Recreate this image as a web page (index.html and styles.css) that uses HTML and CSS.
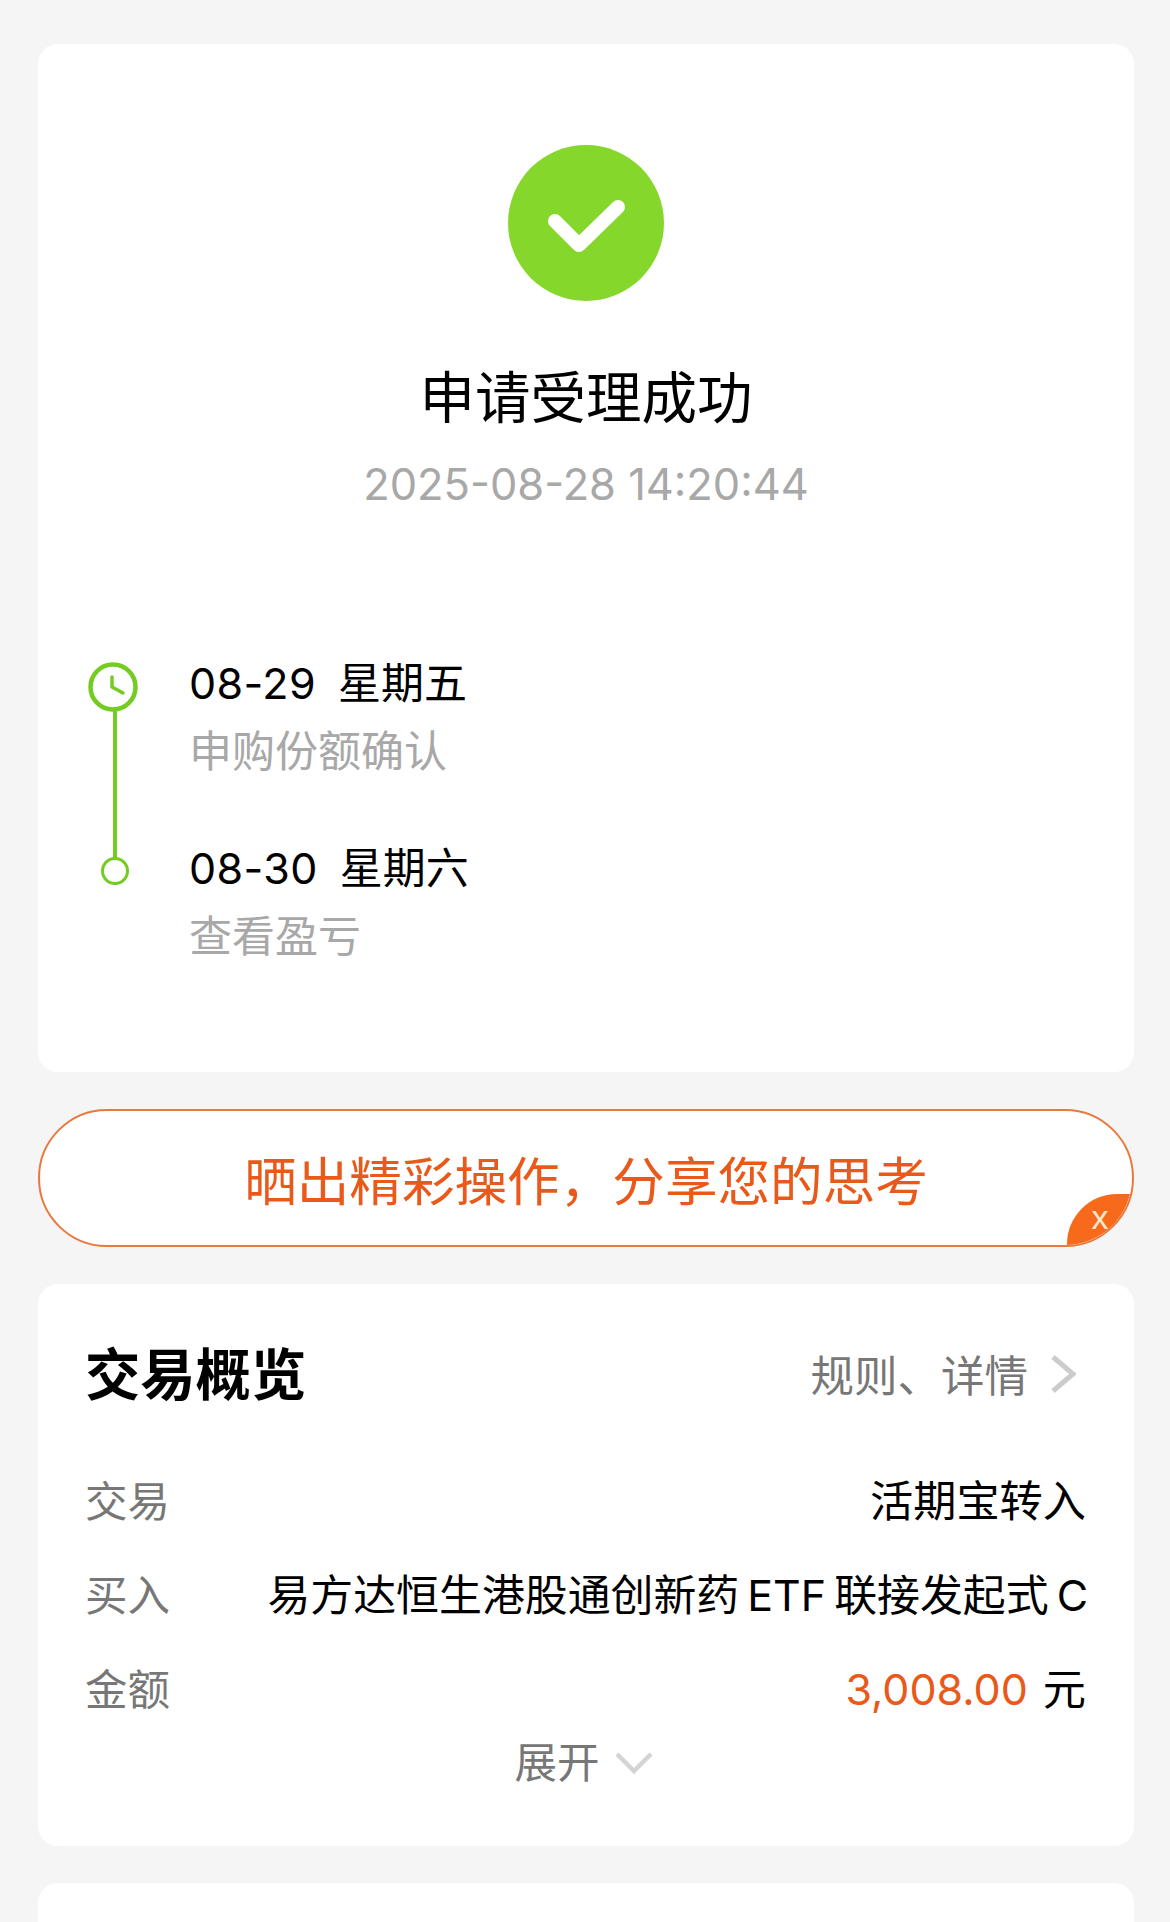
FILE: index.html
```html
<!DOCTYPE html>
<html lang="zh-CN">
<head>
  <meta charset="utf-8">
  <title>申请受理成功</title>
  <link rel="stylesheet" href="styles.css">
</head>
<body>
  <div class="page">
    <div class="card result">
      <svg class="success-icon" viewBox="0 0 156 156" width="156" height="156">
        <circle cx="78" cy="78" r="78" fill="#86d72b"/>
        <path d="M47 76L71 100L110 62" fill="none" stroke="#fff" stroke-width="14" stroke-linecap="round" stroke-linejoin="round"/>
      </svg>
      <div class="result-title">申请受理成功</div>
      <div class="result-time">2025-08-28 14:20:44</div>

      <div class="timeline">
        <div class="step step-first">
          <div class="marker">
            <svg class="clock" viewBox="0 0 50 50" width="50" height="50">
              <circle cx="25" cy="25" r="22.5" fill="#fff" stroke="#74cc22" stroke-width="4.5"/>
              <path d="M24 15V25L35 31" fill="none" stroke="#74cc22" stroke-width="3.5" stroke-linecap="round" stroke-linejoin="round"/>
            </svg>
            <div class="line"></div>
          </div>
          <div class="step-text">
            <div class="step-date"><span class="num">08-29</span><span>星期五</span></div>
            <div class="step-desc">申购份额确认</div>
          </div>
        </div>
        <div class="step">
          <div class="marker">
            <div class="dot"></div>
          </div>
          <div class="step-text">
            <div class="step-date"><span class="num">08-30</span><span>星期六</span></div>
            <div class="step-desc">查看盈亏</div>
          </div>
        </div>
      </div>
    </div>

    <div class="share">
      <span class="share-text">晒出精彩操作，分享您的思考</span>
      <div class="share-close">x</div>
    </div>

    <div class="card overview">
      <div class="overview-head">
        <div class="overview-title">交易概览</div>
        <div class="overview-link">
          <span>规则、详情</span>
          <svg viewBox="0 0 26 40" width="26" height="40">
            <path d="M3 3L23 20L3 37" fill="none" stroke="#ccc" stroke-width="5"/>
          </svg>
        </div>
      </div>
      <div class="row">
        <span class="row-label">交易</span>
        <span class="row-value">活期宝转入</span>
      </div>
      <div class="row">
        <span class="row-label">买入</span>
        <span class="row-value fund-name">易方达恒生港股通创新药 ETF 联接发起式 C</span>
      </div>
      <div class="row">
        <span class="row-label">金额</span>
        <span class="row-value"><span class="amount">3,008.00</span>元</span>
      </div>
      <div class="expand">
        <span>展开</span>
        <svg viewBox="0 0 38 22" width="38" height="22">
          <path d="M2 2L19 19L36 2" fill="none" stroke="#d4d4d4" stroke-width="4.5"/>
        </svg>
      </div>
    </div>

    <div class="card next-card"></div>
  </div>
</body>
</html>
```

FILE: styles.css
```css
html, body {
  margin: 0;
  height: 1922px;
  overflow: hidden;
  background-color: #f5f5f5;
}

body {
  font-family: Inter, "Noto Sans CJK SC", sans-serif;
  color: #000;
}

.page {
  display: flex;
  flex-direction: column;
  gap: 37px;
  padding: 44px 36px 0 38px;
}

.card {
  background-color: #fff;
  border-radius: 20px;
}

/* top card */
.result {
  height: 1028px;
  box-sizing: border-box;
  padding-top: 101px;
  display: flex;
  flex-direction: column;
  align-items: center;
}

.success-icon {
  display: block;
}

.result-title {
  margin-top: 62px;
  font-size: 55.5px;
  line-height: 70px;
}

.result-time {
  margin-top: 23px;
  font-size: 43.4px;
  line-height: 56px;
  color: #a8a8a8;
}

.timeline {
  align-self: stretch;
  margin-top: 146px;
  padding-left: 50px;
}

.step {
  display: flex;
}

.step-first {
  padding-bottom: 67px;
}

.marker {
  width: 54px;
  margin-right: 47px;
  flex-shrink: 0;
  display: flex;
  flex-direction: column;
  align-items: center;
}

.clock {
  display: block;
  margin: 4px 0 -2px;
  align-self: flex-start;
}

.line {
  flex: 1;
  width: 4.5px;
  margin-bottom: -83px;
  background-color: #74cc22;
}

.dot {
  width: 22px;
  height: 22px;
  margin-top: 14px;
  border: 3.5px solid #74cc22;
  border-radius: 50%;
  background-color: #fff;
  position: relative;
}

.step-date {
  display: flex;
  gap: 22px;
  font-size: 43px;
  line-height: 50px;
}

.step-date .num {
  font-size: 43px;
  letter-spacing: 0.4px;
}

.step-desc {
  margin-top: 18px;
  font-size: 43px;
  line-height: 50px;
  color: #a8a8a8;
}

/* share banner */
.share {
  height: 138px;
  box-sizing: border-box;
  border: 2px solid #e8793f;
  border-radius: 69px;
  background-color: #fff;
  overflow: hidden;
  position: relative;
  display: flex;
  align-items: center;
  justify-content: center;
}

.share-text {
  font-size: 52.6px;
  color: #e8591a;
}

.share-close {
  position: absolute;
  right: -1px;
  bottom: -1px;
  width: 66px;
  height: 52px;
  border-top-left-radius: 50px;
  background-color: #f76a1c;
  color: #ffe9d0;
  font-family: "Liberation Sans", sans-serif;
  font-size: 34px;
  line-height: 46px;
  text-align: center;
}

/* overview card */
.overview {
  height: 562px;
  box-sizing: border-box;
  padding: 56px 48px 0 47px;
}

.overview-head {
  display: flex;
  justify-content: space-between;
  align-items: center;
  margin-right: 10px;
}

.overview-title {
  font-size: 55.3px;
  line-height: 70px;
  font-weight: 700;
}

.overview-link {
  display: flex;
  align-items: center;
  gap: 22px;
  margin-top: -3px;
  font-size: 43.5px;
  color: #777;
}

.overview-link svg {
  display: block;
}

.overview-head + .row {
  margin-top: 41px;
}

.row {
  height: 94px;
  display: flex;
  justify-content: space-between;
  align-items: center;
  font-size: 43.2px;
}

.row-label {
  font-size: 42.5px;
  color: #777;
}

.fund-name {
  margin-right: -2px;
  font-size: 42.9px;
  word-spacing: -4px;
}

.amount {
  margin-right: 15px;
  font-size: 43px;
  color: #e8591a;
}

.expand {
  display: flex;
  justify-content: center;
  align-items: center;
  gap: 15px;
  margin-top: 2px;
  padding-right: 4px;
  font-size: 42.5px;
  line-height: 56px;
  color: #777;
}

.next-card {
  height: 100px;
}
```
